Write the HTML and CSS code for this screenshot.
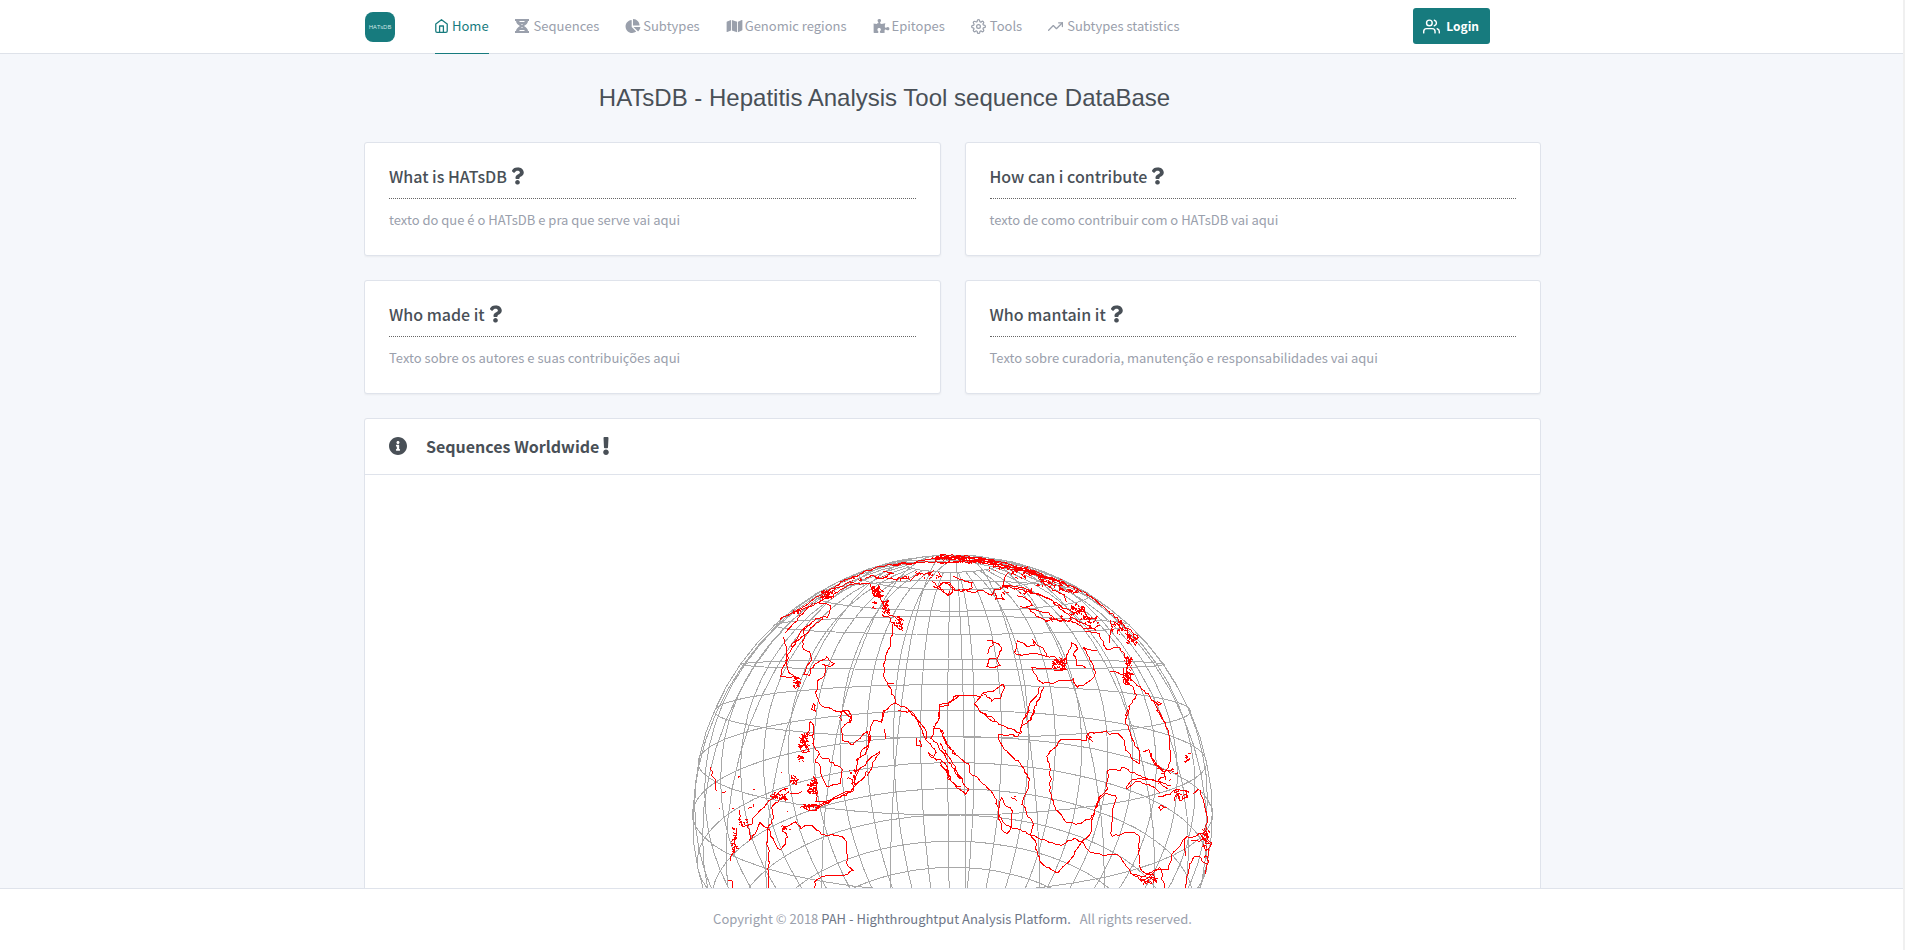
FILE: index.html
```html
<!DOCTYPE html>
<html lang="en">
<head>
<meta charset="utf-8">
<title>HATsDB</title>
<link rel="stylesheet" href="styles.css">
</head>
<body>
<svg class="sprite" aria-hidden="true">
  <symbol id="question" viewBox="0 0 384 512"><path d="M202.021 0C122.202 0 70.503 32.703 29.914 91.026c-7.363 10.58-5.093 25.086 5.178 32.874l43.138 32.709c10.373 7.865 25.132 6.026 33.253-4.148 25.049-31.381 43.63-49.449 82.757-49.449 30.764 0 68.816 19.799 68.816 49.631 0 22.552-18.617 34.134-48.993 51.164-35.423 19.86-82.299 44.576-82.299 106.405V320c0 13.255 10.745 24 24 24h72.471c13.255 0 24-10.745 24-24v-5.773c0-42.86 125.268-44.645 125.268-160.627C377.504 66.256 286.902 0 202.021 0zM192 373.459c-38.196 0-69.271 31.075-69.271 69.271 0 38.195 31.075 69.27 69.271 69.27s69.271-31.075 69.271-69.271-31.075-69.27-69.271-69.27z"/></symbol>
</svg>
<header class="header">
  <div class="container header-row">
    <a class="logo" href="#">HATsDB</a>
    <nav class="nav">
      <a class="nav-link active" href="#"><svg class="line home" viewBox="2 1 20 22"><path d="M3 9l9-7 9 7v11a2 2 0 0 1-2 2H5a2 2 0 0 1-2-2z"/><path d="M9 22V12h6v10"/></svg>Home</a>
      <a class="nav-link" href="#"><svg class="solid dna" viewBox="0 0 14 14"><path d="M0 0h14v2h-1c0 2-2 4-4 5 2 1 4 3 4 5h1v2H0v-2h1c0-2 2-4 4-5-2-1-4-3-4-5H0zM4 2l1 1h4l1-1zM6 5l1 1 1-1zM7 8L6 9h2zM5 11l-1 1h6l-1-1z"/></svg>Sequences</a>
      <a class="nav-link tight" href="#"><svg class="solid pie" viewBox="0 0 544 512"><path d="M527.79 288H290.5l158.03 158.03c6.04 6.04 15.98 6.53 22.19.68 38.7-36.46 65.32-85.61 73.13-140.86 1.34-9.46-6.51-17.85-16.06-17.85zm-15.83-64.8C503.72 103.74 408.26 8.28 288.8.04 279.68-.59 272 7.1 272 16.24V240h223.77c9.14 0 16.82-7.68 16.19-16.8zM224 288V50.71c0-9.55-8.39-17.4-17.84-16.06C86.99 51.49-4.1 155.6.14 280.37 4.5 408.51 114.83 513.59 243.03 511.98c50.4-.63 96.97-16.87 135.26-44.03 7.9-5.6 8.42-17.23 1.57-24.08L224 288z"/></svg>Subtypes</a>
      <a class="nav-link tight" href="#"><svg class="solid map" viewBox="0 0 576 512"><path d="M0 117.66v346.32c0 11.32 11.43 19.06 21.94 14.86L160 416V32L20.12 87.95A32.006 32.006 0 0 0 0 117.66zM192 416l192 64V96L192 32v384zM554.06 33.16L416 96v384l139.88-55.95A31.996 31.996 0 0 0 576 394.34V48.02c0-11.32-11.43-19.06-21.94-14.86z"/></svg>Genomic regions</a>
      <a class="nav-link tight" href="#"><svg class="solid map" viewBox="0 0 576 512"><path d="M519.442 288.651c-41.519 0-59.5 31.593-82.058 31.593C377.409 320.244 432 144 432 144s-196.288 80-196.288-3.297c0-35.827 36.288-46.25 36.288-85.985C272 19.216 243.885 0 210.539 0c-34.654 0-66.366 18.891-66.366 56.346 0 41.364 31.711 59.277 31.711 81.75C175.885 207.719 0 166.758 0 166.758v333.237s178.635 41.047 178.635-28.662c0-22.473-40-40.107-40-81.471 0-37.456 29.25-56.346 63.577-56.346 33.673 0 61.788 19.216 61.788 54.717 0 39.735-36.288 50.158-36.288 85.985 0 60.803 129.675 25.73 181.23 25.73 0 0-34.725-120.101 25.827-120.101 35.962 0 46.423 36.152 86.308 36.152C556.712 416 576 387.99 576 354.443c0-34.199-18.962-65.792-56.558-65.792z"/></svg>Epitopes</a>
      <a class="nav-link" href="#"><svg class="line gear" viewBox="0 0 24 24"><circle cx="12" cy="12" r="3"/><path d="M19.4 15a1.65 1.65 0 0 0 .33 1.82l.06.06a2 2 0 0 1-2.83 2.83l-.06-.06a1.65 1.65 0 0 0-2.8 1.17V21a2 2 0 0 1-4 0v-.09a1.65 1.65 0 0 0-2.9-1.26l-.06.06a2 2 0 0 1-2.83-2.83l.06-.06a1.65 1.65 0 0 0-1.17-2.8H3a2 2 0 0 1 0-4h.09a1.65 1.65 0 0 0 1.26-2.9l-.06-.06a2 2 0 0 1 2.83-2.83l.06.06a1.65 1.65 0 0 0 2.8-1.17V3a2 2 0 0 1 4 0v.09a1.65 1.65 0 0 0 2.82 1.26l.06-.06a2 2 0 0 1 2.83 2.83l-.06.06a1.65 1.65 0 0 0 1.17 2.8H21a2 2 0 0 1 0 4h-.09a1.65 1.65 0 0 0-1.51 1z"/></svg>Tools</a>
      <a class="nav-link" href="#"><svg class="line gear" viewBox="0 0 24 24"><path d="M23 6l-9.500 9.500-5-5L1 18"/><path d="M17 6h6v6"/></svg>Subtypes statistics</a>
    </nav>
    <button class="login" type="button"><svg class="line users" viewBox="0 0 24 24"><path d="M17 21v-2a4 4 0 0 0-4-4H5a4 4 0 0 0-4 4v2M23 21v-2a4 4 0 0 0-3-3.870M16 3.130a4 4 0 0 1 0 7.750"/><circle cx="9" cy="7" r="4"/></svg>Login</button>
  </div>
</header>
<main class="container main">
  <h1 class="title">HATsDB - Hepatitis Analysis Tool sequence DataBase</h1>
  <div class="cards">
    <section class="card info"><h2>What is HATsDB <svg class="mark" viewBox="0 0 384 512"><use href="#question"/></svg></h2><p>texto do que é o HATsDB e pra que serve vai aqui</p></section>
    <section class="card info"><h2>How can i contribute <svg class="mark" viewBox="0 0 384 512"><use href="#question"/></svg></h2><p>texto de como contribuir com o HATsDB vai aqui</p></section>
    <section class="card info"><h2>Who made it <svg class="mark" viewBox="0 0 384 512"><use href="#question"/></svg></h2><p>Texto sobre os autores e suas contribuições aqui</p></section>
    <section class="card info"><h2>Who mantain it <svg class="mark" viewBox="0 0 384 512"><use href="#question"/></svg></h2><p>Texto sobre curadoria, manutenção e responsabilidades vai aqui</p></section>
  </div>
  <section class="card world">
    <h2 class="world-head"><svg class="info-icon" viewBox="8 8 496 496"><path d="M256 8C119.043 8 8 119.083 8 256c0 136.997 111.043 248 248 248s248-111.003 248-248C504 119.083 392.957 8 256 8zm0 110c23.196 0 42 18.804 42 42s-18.804 42-42 42-42-18.804-42-42 18.804-42 42-42zm56 254c0 6.627-5.373 12-12 12h-88c-6.627 0-12-5.373-12-12v-24c0-6.627 5.373-12 12-12h12v-64h-12c-6.627 0-12-5.373-12-12v-24c0-6.627 5.373-12 12-12h64c6.627 0 12 5.373 12 12v100h12c6.627 0 12 5.373 12 12v24z"/></svg><span>Sequences Worldwide</span><svg class="bang" viewBox="0 0 192 512"><path d="M176 432c0 44.112-35.888 80-80 80s-80-35.888-80-80 35.888-80 80-80 80 35.888 80 80zM25.26 25.199l13.6 272C39.499 309.972 50.041 320 62.83 320h66.34c12.789 0 23.331-10.028 23.97-22.801l13.6-272C167.425 11.49 156.496 0 142.77 0H49.23C35.504 0 24.575 11.49 25.26 25.199z"/></svg></h2>
    <div class="globe-wrap"><svg class="globe" viewBox="0 0 1635 1650"><path id="grid" class="grid"/><path id="coast" class="coast"/></svg></div>
  </section>
</main>
<footer class="footer">Copyright © 2018 <a href="#">PAH - Highthroughtput Analysis Platform.</a> &nbsp; All rights reserved.</footer>
<script src="globe.js"></script>
</body>
</html>
```
FILE: styles.css
```css
* { box-sizing: border-box; }
html { height: 100%; overflow: hidden; }
body {
  margin: 0;
  height: 100%;
  overflow: hidden;
  display: flex;
  flex-direction: column;
  background: #f5f7fb;
  color: #495057;
  font: 13px/24px "Noto Sans CJK SC", sans-serif;
}
body::after { content: ""; position: fixed; top: 0; right: 0; bottom: 0; width: 2px; background: #f0f0f0; }
a { color: inherit; text-decoration: none; }
.sprite { display: none; }
.container { width: 100%; max-width: 1177px; margin: 0 auto; }
.header { flex: none; background: #fff; border-bottom: 1px solid #dee2e9; }
.header-row { display: flex; align-items: center; height: 53px; padding-left: 1px; }
.logo {
  width: 30px;
  height: 30px;
  margin-right: 40px;
  border-radius: 8px;
  background: #177b7e;
  color: #d5eaea;
  font: 6px/30px "Open Sans", sans-serif;
  text-align: center;
}
.nav { display: flex; gap: 26px; font-size: 13px; color: #9aa0ac; white-space: nowrap; }
.nav-link { display: flex; align-items: center; gap: 4px; height: 54px; border-bottom: 1px solid transparent; }
.tight { gap: 2px; }
.active { color: #177b7e; border-color: #177b7e; }
.solid { fill: currentColor; height: 14px; }
.line { fill: none; stroke: currentColor; stroke-width: 2; stroke-linecap: round; stroke-linejoin: round; }
.home { width: 13px; height: 14px; }
.dna { width: 14px; margin-right: 1px; }
.pie { width: 16px; }
.map { width: 17px; }
.gear { width: 15px; height: 15px; }
.login {
  display: flex;
  align-items: center;
  gap: 6px;
  height: 36px;
  margin: 0 51px 1px auto;
  padding: 0 11px 0 10px;
  border: 0;
  border-radius: 3px;
  background: #177b7e;
  color: #fff;
  font: 700 12px/24px "Noto Sans CJK SC", sans-serif;
}
.users { width: 17px; height: 17px; }
.main { flex: 1; min-height: 0; overflow: hidden; }
.title { margin: 28px 136px 28px 0; font: 500 24px/32px "Liberation Sans", Arial, sans-serif; text-align: center; }
.cards { display: grid; grid-template-columns: 1fr 1fr; gap: 24px; }
.card { background: #fff; border: 1px solid #dfe3eb; border-radius: 3px; box-shadow: 0 1px 2px rgba(0, 0, 0, .05); }
.info { height: 114px; padding: 20px 24px; }
.info h2 { display: flex; align-items: center; gap: 4px; height: 36px; margin: 0; padding-bottom: 10px; border-bottom: 1px dotted #666; font-size: 16px; font-weight: 500; }
.info p { margin: 9px 0 0; color: #9aa0ac; }
.mark { width: 13px; height: 18px; fill: currentColor; }
.world { margin-top: 24px; height: 900px; }
.world-head { display: flex; align-items: center; height: 56px; margin: 0; padding: 0 24px 2px; border-bottom: 1px solid #dfe3eb; font-size: 16px; font-weight: 700; }
.info-icon { width: 18px; height: 18px; margin-right: 19px; fill: currentColor; }
.bang { width: 8px; height: 18px; margin-left: 3px; fill: currentColor; }
.globe-wrap { padding-top: 65px; display: flex; justify-content: center; }
.globe { width: 545px; height: 550px; }
.grid, .coast { fill: none; stroke-width: 3; shape-rendering: crispEdges; }
.grid { stroke: #a8a8a8; }
.coast { stroke: #f00; }
.footer { flex: none; height: 62px; padding-top: 18px; border-top: 1px solid #dfe3eb; background: #fff; color: #9aa0ac; text-align: center; font-size: 13px; line-height: 24px; }
.footer a { color: #6e7687; }
```
FILE: globe.js
```js
// Perspective view of a transparent sphere; three drawing units per pixel.
const RAD = Math.PI / 180, LON = -111.75, LAT = 20, DIST = 2, F = 1351;
function project(lon, lat) {
  const l = (lon - LON) * RAD, p = lat * RAD, c = LAT * RAD;
  const x = Math.cos(p) * Math.sin(l);
  const y = Math.sin(p) * Math.cos(c) - Math.cos(p) * Math.sin(c) * Math.cos(l);
  const z = Math.sin(p) * Math.sin(c) + Math.cos(p) * Math.cos(c) * Math.cos(l);
  const k = F / (DIST - z);
  return (817 + x * k).toFixed(0) + ' ' + (825 - y * k).toFixed(0);
}
let grid = '';
for (let lon = -180; lon < 180; lon += 10) {
  const end = lon % 90 === 0 ? 90 : 80, pts = [];
  for (let lat = -end; lat <= end; lat += 5) pts.push(project(lon, lat));
  grid += 'M' + pts.join('L');
}
for (let lat = -80; lat <= 80; lat += 10) {
  const pts = [];
  for (let lon = -180; lon <= 180; lon += 5) pts.push(project(lon, lat));
  grid += 'M' + pts.join('L');
}
document.getElementById('grid').setAttribute('d', grid);

// Coastlines by tile: x offset, y offset, roughness, polylines.
const tiles = [
  [0, 0, 2, [
    '415 187 440 192 453 195 447 215 443 232 415 233 395 245 372 270 368 330 388 333 397 360 378 380 372 402 388 408 392 388 405 372 425 365 440 352 460 368 448 380 430 375',
    '400 190 380 207 350 240 330 262 318 280',
    '430 235 395 262 370 285 350 305 335 325 325 345 315 370 305 390 300 410 325 412 350 412 358 430 348 445',
    '310 290 313 310 318 330 322 345 320 375 330 400 345 410 365 420',
    '395 245 370 268 352 293 335 322',
    '438 378 433 403 415 422 410 450 405 455 415 485 430 500 460 510 485 515 505 512 515 530 510 545',
    '485 515 480 530 487 545', '398 490 405 495 403 512 397 510 398 490',
    '590 140 600 175 615 200 620 220 640 232 655 240 665 270', '605 225 625 232 640 250 660 270', '640 250 638 285 632 315 615 345 612 385 612 410 625 430 635 460 648 490 670 500 690 510 705 525 710 540',
    '625 430 640 430', '650 492 630 495 610 520 605 540', '775 540 780 495 800 490 820 480 840 465',
    '455 155 480 140 510 128 535 130 570 133 575 150 590 155', '555 115 575 105 590 118 615 112 640 118 665 115 690 118 710 105 740 100 765 92', '610 95 640 98 625 105',
    '300 238 330 222 352 208 380 197 400 180 430 158 455 150 480 128 520 110 540 100 580 86 620 76 700 68 760 56 840 50',
    '340 215 375 205 400 195 430 180 465 160 490 148 520 130', '640 76 700 70 760 66 800 70 840 68',
    '755 125 775 138 790 125 810 130 825 150 840 150', '760 140 790 150 805 168 812 155'
  ]],
  [780, 0, 2, [
    '0 48 60 52 130 58 180 66 220 76 270 92 310 107 360 126 400 142 430 155', '0 45 60 47 120 53 180 66', '0 55 70 58 130 68 190 75 240 90 290 100 340 118 390 138',
    '0 68 50 66 110 65 170 78 210 85 250 90 300 110 330 120', '0 50 90 60 150 66 230 85 300 107 380 132', '430 155 480 190 520 225 550 255 597 290',
    '0 130 20 128 40 145 30 165 12 160 0 140', '38 110 60 115 75 125 98 130 95 145 65 152 40 148', '65 148 95 155 125 152 155 165 165 150 185 145 193 120 205 98',
    '165 160 170 175 190 178 185 165', '185 135 215 138 250 145 290 160 325 175 345 185 370 205 400 215 425 210', '190 138 240 150 300 166 340 182', '230 165 265 178 275 195 260 200 290 225 310 240 345 240 375 242',
    '240 200 270 205 300 215 325 218 350 240 400 245 430 262 470 270', '405 205 430 215 450 235 475 230', '340 190 370 210 400 235 430 250 460 265 480 255', '310 130 340 150 370 165 378 185',
    '140 302 155 305 160 315 148 325 140 345', '155 305 175 310 183 320 178 345 172 360 178 375 165 382 143 378 143 358 165 355',
    '230 302 250 310 265 320 280 318 280 305 300 318 320 340 318 348', '230 310 225 335 235 345 265 345 290 338 318 348 345 352 360 365 380 372',
    '275 382 310 385 335 382 350 365 375 385 358 392 338 390', '275 382 290 410 300 428 330 430 355 422 385 420 400 418 410 440 430 435 460 415 465 395 457 370 445 345 430 322',
    '380 372 378 350 388 330 395 312 408 312 412 325 400 345 410 360 410 375 435 382', '430 322 440 330 470 328', '435 275 475 280 485 300 500 328 540 325 552 340 560 370 562 400',
    '510 240 515 260 508 305', '520 245 540 265 560 275 590 320', '510 393 540 402 565 400 580 425 600 440 630 470 655 510 668 540', '550 385 552 410 575 440 588 465 572 495 560 525 558 540',
    '555 370 575 365 560 350', '635 480 655 495 665 490 650 485', '190 432 172 445 155 458 130 458 105 490 120 515 150 530 165 540', '190 432 195 445 180 475 155 480 130 460', '130 465 100 470 75 465 45 470 25 495 0 500', '298 442 290 470 270 490 265 515 250 540', '312 440 300 470 280 510 270 540'
  ]],
  [0, 510, 2, [
    '487 0 512 20 508 35 485 55 487 90 505 95 518 105 535 88 560 62', '460 0 485 5', '615 0 605 35 580 30 570 50 568 100 545 120 535 150 530 165', '560 62 565 95 570 75', '615 58 617 85', '600 125 575 140 555 165 530 185 530 150 560 130 570 80', '600 125 580 160 560 200',
    '655 0 690 5 710 25 722 50 735 85 755 105 770 125 765 140 745 130 750 140 780 150 802 165 805 205 820 220 840 232', '780 0 775 25 760 60 755 85 765 95 790 130 800 150 840 205', '710 85 708 108 722 110 720 90', '760 50 785 60 795 95 820 130 840 145', '685 0 705 20 735 60 740 90',
    '390 35 400 45 398 80 402 110 420 135 405 155 420 165 420 195 440 228 480 220 488 175 465 165 445 150 420 140', '390 35 383 70 392 80',
    '400 200 410 220 410 270 440 275 480 262 520 240 520 210 510 205', '360 292 390 285 420 288 460 268 500 255 530 225 550 205 560 180', '370 290 395 302 420 290', '520 230 530 190 550 170', '420 284 460 262 505 245',
    '180 300 178 330 190 348 215 345 220 325 245 295 265 275 300 245 325 235', '275 290 280 325 262 355 240 340 225 370 210 390 210 370 200 345', '275 290 300 270 330 245', '262 355 275 380 300 420 315 405 320 380 308 360 325 345 345 335 365 355 375 345 395 345 410 360 430 375 490 380 500 405 503 470 518 480 505 492 475 497 425 498 405 515 403 540',
    '262 355 262 400 268 430 265 470 268 540', '170 355 165 395 158 430 152 450', '145 510 155 515 155 540', '92 170 98 195 105 215 108 240', '205 295 213 292', '330 250 350 252 365 245'
  ]],
  [780, 510, 2, [
    '0 60 15 85 25 110 50 135 85 165 90 190 125 215 165 260 175 300 185 335 220 355 255 365 280 378 330 398 370 405 385 390 405 385 425 398 450 425 490 435 532 432 560 470 570 490 610 512 635 520',
    '0 100 20 130 40 160 60 200 85 240 78 252 60 240 25 205 25 190 0 160', '0 165 25 185 30 210', '120 5 160 35 205 55 240 68 235 80 175 70 180 95 205 130 240 160 265 200 265 230 248 280 260 310 283 340 270 375 285 390 290 425 305 460 350 490 395 445 425 395 455 365 455 320 470 290 480 265',
    '240 65 250 30 268 0', '285 0 270 30 245 50 240 75', '185 262 178 280 175 315 185 360 200 370 212 360 217 325 213 295 195 285 185 262',
    '440 92 400 88 360 90 345 110 325 130 320 145 332 175 330 250 345 290 375 333 405 342 440 330 460 318 475 270 500 240 505 180 525 180 538 185 548 170 590 195 640 210 685 235',
    '440 92 445 68 470 68 500 65 515 75 530 68 550 85 560 120 580 150 600 160 600 130 575 80 558 40 565 0', '440 80 450 85 460 92', '475 270 500 252 530 255 520 290 515 330 513 378 545 372 580 365 598 380 595 455 605 480 625 495 660 475 685 480',
    '558 238 575 210 600 203 630 210 660 215 690 225', '562 235 585 215 620 220 650 235 660 250', '610 125 630 120 633 140 650 165 670 180', '650 0 665 25 685 65 690 110 692 155 680 180 670 200 650 215',
    '655 260 690 250 710 240 735 240 745 260 720 275 710 250 700 270', '760 250 775 240', '655 290 665 298 680 292 665 285 655 290', '635 130 640 160 665 180 700 185', '780 240 795 290 800 330 800 380 812 400 805 440 800 490',
    '570 490 600 500 635 490 660 470 665 500 675 540', '610 512 625 500 650 515 640 490 620 510', '685 480 695 435 725 400 735 380 735 440', '735 385 770 375 800 365 795 390 755 395', '735 540 745 480 760 440 780 440 800 465', '780 370 790 385 812 405'
  ]]
];
// Small-island clusters: centre, spread, count.
const clusters = [
  [590, 155, 14, 16, 60], [615, 205, 10, 22, 36], [655, 245, 10, 16, 24], [580, 195, 4, 12, 8], [440, 162, 24, 10, 50], [350, 215, 14, 8, 10], [348, 425, 10, 14, 24],
  [510, 116, 40, 8, 18], [630, 112, 70, 8, 14], [730, 105, 50, 10, 20], [820, 52, 60, 6, 90], [900, 60, 70, 9, 70], [980, 78, 60, 14, 60], [1040, 98, 50, 16, 60], [1110, 122, 40, 16, 50], [1160, 146, 30, 12, 30],
  [1010, 150, 60, 12, 12], [1190, 210, 22, 14, 40], [1135, 235, 40, 10, 18], [1225, 245, 30, 14, 24], [1320, 265, 24, 20, 24], [1355, 295, 16, 14, 40], [1135, 370, 20, 18, 60], [1342, 390, 10, 36, 34], [1335, 415, 8, 18, 30],
  [370, 610, 14, 28, 60], [360, 655, 8, 14, 12], [395, 740, 12, 22, 54], [340, 720, 10, 14, 16], [295, 768, 24, 12, 30], [390, 800, 24, 6, 24], [160, 900, 8, 40, 24], [190, 845, 12, 10, 14], [315, 865, 12, 8, 10],
  [230, 745, 130, 80, 10], [515, 710, 16, 20, 14], [1225, 590, 8, 8, 8], [1405, 1020, 26, 10, 26], [1515, 655, 10, 14, 8], [1460, 705, 30, 20, 10], [1575, 910, 8, 44, 28], [1500, 760, 20, 12, 14], [1000, 775, 8, 3, 4]
];
let seed = 7;
function rand() { seed = (seed * 16807) % 2147483647; return seed / 2147483647 - 0.5; }
let coast = '';
for (const [ox, oy, rough, lines] of tiles) {
  for (const line of lines) {
    const n = line.split(' ').map(Number);
    let px = n[0] + ox, py = n[1] + oy;
    coast += `M${px} ${py}`;
    for (let i = 2; i < n.length; i += 2) {
      const x = n[i] + ox, y = n[i + 1] + oy;
      const steps = Math.max(1, Math.round(Math.hypot(x - px, y - py) / 9));
      for (let s = 1; s <= steps; s++) {
        const t = s / steps;
        coast += `L${Math.round(px + (x - px) * t + rand() * rough * 3)} ${Math.round(py + (y - py) * t + rand() * rough * 3)}`;
      }
      px = x; py = y;
    }
  }
}
for (const [cx, cy, w, h, count] of clusters) {
  for (let i = 0; i < count; i++) {
    const x = cx + rand() * w * 2, y = cy + rand() * h * 2;
    if (Math.hypot(x + 4 - 817, y - 825) > 775) continue;
    coast += `M${Math.round(x)} ${Math.round(y)}l${Math.round(3 + rand() * 8)} ${Math.round(rand() * 8)}l${Math.round(rand() * 6)} 3`;
  }
}
document.getElementById('coast').setAttribute('d', coast);
```
